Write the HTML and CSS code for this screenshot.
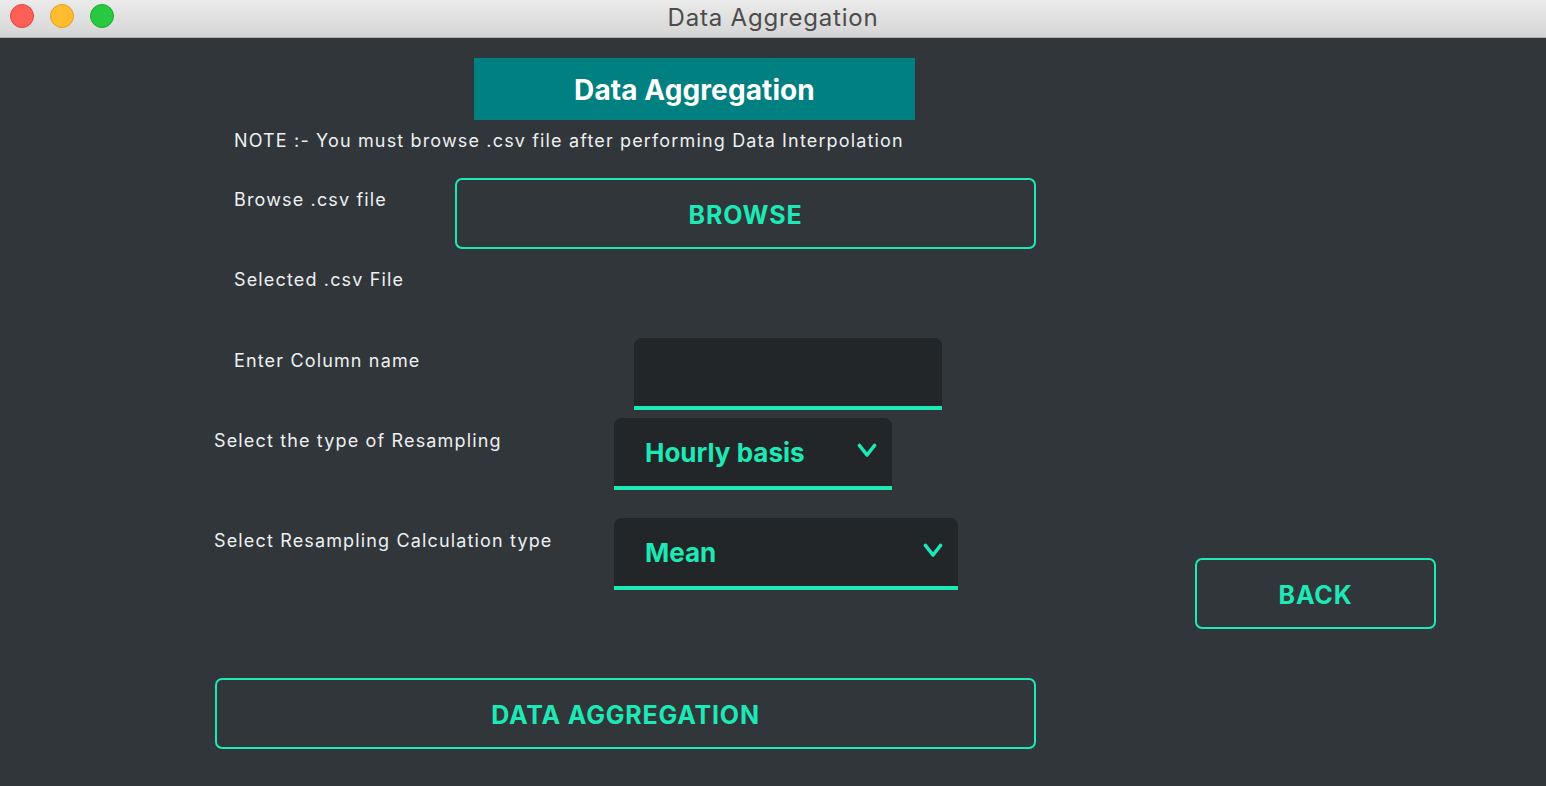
FILE: index.html
```html
<!DOCTYPE html>
<html>
<head>
<meta charset="utf-8">
<title>Data Aggregation</title>
<link rel="stylesheet" href="styles.css">
</head>
<body>
<div class="window">
  <div class="titlebar">
    <div class="lights">
      <span class="light red"></span>
      <span class="light yellow"></span>
      <span class="light green"></span>
    </div>
    <div class="title">Data Aggregation</div>
  </div>
  <div class="content">
    <div class="header">Data Aggregation</div>
    <div class="note">NOTE :- You must browse .csv file after performing Data Interpolation</div>
    <div class="row row-browse">
      <div class="label label-browse">Browse .csv file</div>
      <button class="btn btn-browse">BROWSE</button>
    </div>
    <div class="row row-selected">
      <div class="label">Selected .csv File</div>
    </div>
    <div class="row row-column">
      <div class="label label-wide">Enter Column name</div>
      <div class="input"></div>
    </div>
    <div class="row row-resample">
      <div class="label label-wide">Select the type of Resampling</div>
      <div class="combo combo-hourly">
        <span class="combo-text">Hourly basis</span>
        <svg class="chev" width="20" height="15" viewBox="0 0 20 15"><path d="M2.5 2.5 L10 12 L17.5 2.5" fill="none" stroke="#1de9b6" stroke-width="3.6" stroke-linecap="round" stroke-linejoin="round"/></svg>
      </div>
    </div>
    <div class="row row-calc">
      <div class="label label-wide">Select Resampling Calculation type</div>
      <div class="combo combo-mean">
        <span class="combo-text">Mean</span>
        <svg class="chev" width="20" height="15" viewBox="0 0 20 15"><path d="M2.5 2.5 L10 12 L17.5 2.5" fill="none" stroke="#1de9b6" stroke-width="3.6" stroke-linecap="round" stroke-linejoin="round"/></svg>
      </div>
      <button class="btn btn-back">BACK</button>
    </div>
    <div class="row row-agg">
      <button class="btn btn-agg">DATA AGGREGATION</button>
    </div>
  </div>
</div>
</body>
</html>
```

FILE: styles.css
```css
* { box-sizing: border-box; }
html, body {
  margin: 0;
  padding: 0;
  width: 1546px;
  height: 786px;
  overflow: hidden;
  background: #31363b;
  font-family: Inter, "Noto Sans", "Liberation Sans", sans-serif;
}
.window {
  display: flex;
  flex-direction: column;
  height: 786px;
}
.titlebar {
  height: 38px;
  flex: none;
  background: linear-gradient(#ebebeb, #d5d5d5);
  border-bottom: 1px solid #b1b1b1;
  display: flex;
  align-items: center;
  position: relative;
}
.lights {
  display: flex;
  gap: 16px;
  padding-left: 10px;
  margin-top: -6px;
}
.light {
  width: 24px;
  height: 24px;
  border-radius: 50%;
  display: block;
}
.red { background: #fe5f57; border: 1px solid #e0443e; }
.yellow { background: #febc2e; border: 1px solid #dea123; }
.green { background: #28c840; border: 1px solid #1aab29; }
.title {
  position: absolute;
  left: 0;
  right: 0;
  top: 3px;
  text-align: center;
  font-size: 24px;
  letter-spacing: 0.8px;
  color: #4c4c4c;
  line-height: 30px;
}
.content {
  padding-left: 214px;
  padding-top: 20px;
  display: flex;
  flex-direction: column;
  color: #eef0f1;
}
.header {
  margin-left: 260px;
  width: 441px;
  height: 62px;
  background: #008080;
  color: #ffffff;
  font-weight: 700;
  font-size: 28px;
  letter-spacing: 0.1px;
  display: flex;
  align-items: center;
  justify-content: center;
  padding-top: 2px;
}
.note {
  margin-top: 10px;
  margin-left: 20px;
  font-size: 18px;
  letter-spacing: 1.15px;
  line-height: 22px;
}
.row {
  display: flex;
  align-items: flex-start;
}
.label {
  font-size: 18px;
  letter-spacing: 1.15px;
  line-height: 22px;
  flex: none;
}
.row-browse { margin-top: 26px; padding-left: 20px; }
.label-browse { width: 221px; padding-top: 11px; }
.row-selected { margin-top: 20px; padding-left: 20px; }
.row-column { margin-top: 47px; padding-left: 20px; }
.label-wide { width: 400px; padding-top: 12px; }
.row-resample { margin-top: 8px; }
.row-calc { margin-top: 28px; }
.row-agg { margin-top: 49px; }

.btn {
  background: transparent;
  border: 2px solid #1de9b6;
  border-radius: 7px;
  color: #1de9b6;
  font-family: Inter, "Noto Sans", "Liberation Sans", sans-serif;
  font-weight: 700;
  font-size: 25px;
  letter-spacing: 0.8px;
  height: 71px;
  padding: 2px 0 0 0;
  display: flex;
  align-items: center;
  justify-content: center;
}
.btn-browse { width: 581px; }
.btn-back { width: 241px; margin-left: 237px; margin-top: 40px; }
.btn-agg { width: 821px; margin-left: 1px; }

.input {
  width: 308px;
  height: 72px;
  background: #232629;
  border-radius: 8px 8px 0 0;
  border-bottom: 4px solid #1de9b6;
}
.combo {
  height: 72px;
  background: #232629;
  border-radius: 8px 8px 0 0;
  border-bottom: 4px solid #1de9b6;
  display: flex;
  align-items: center;
  justify-content: space-between;
  padding-left: 31px;
  padding-right: 15px;
  color: #1de9b6;
  font-weight: 700;
  font-size: 26px;
}
.combo-text { padding-top: 0; }
.combo-hourly { width: 278px; }
.combo-mean { width: 344px; }
.chev { display: block; margin-top: -4px; }
```
